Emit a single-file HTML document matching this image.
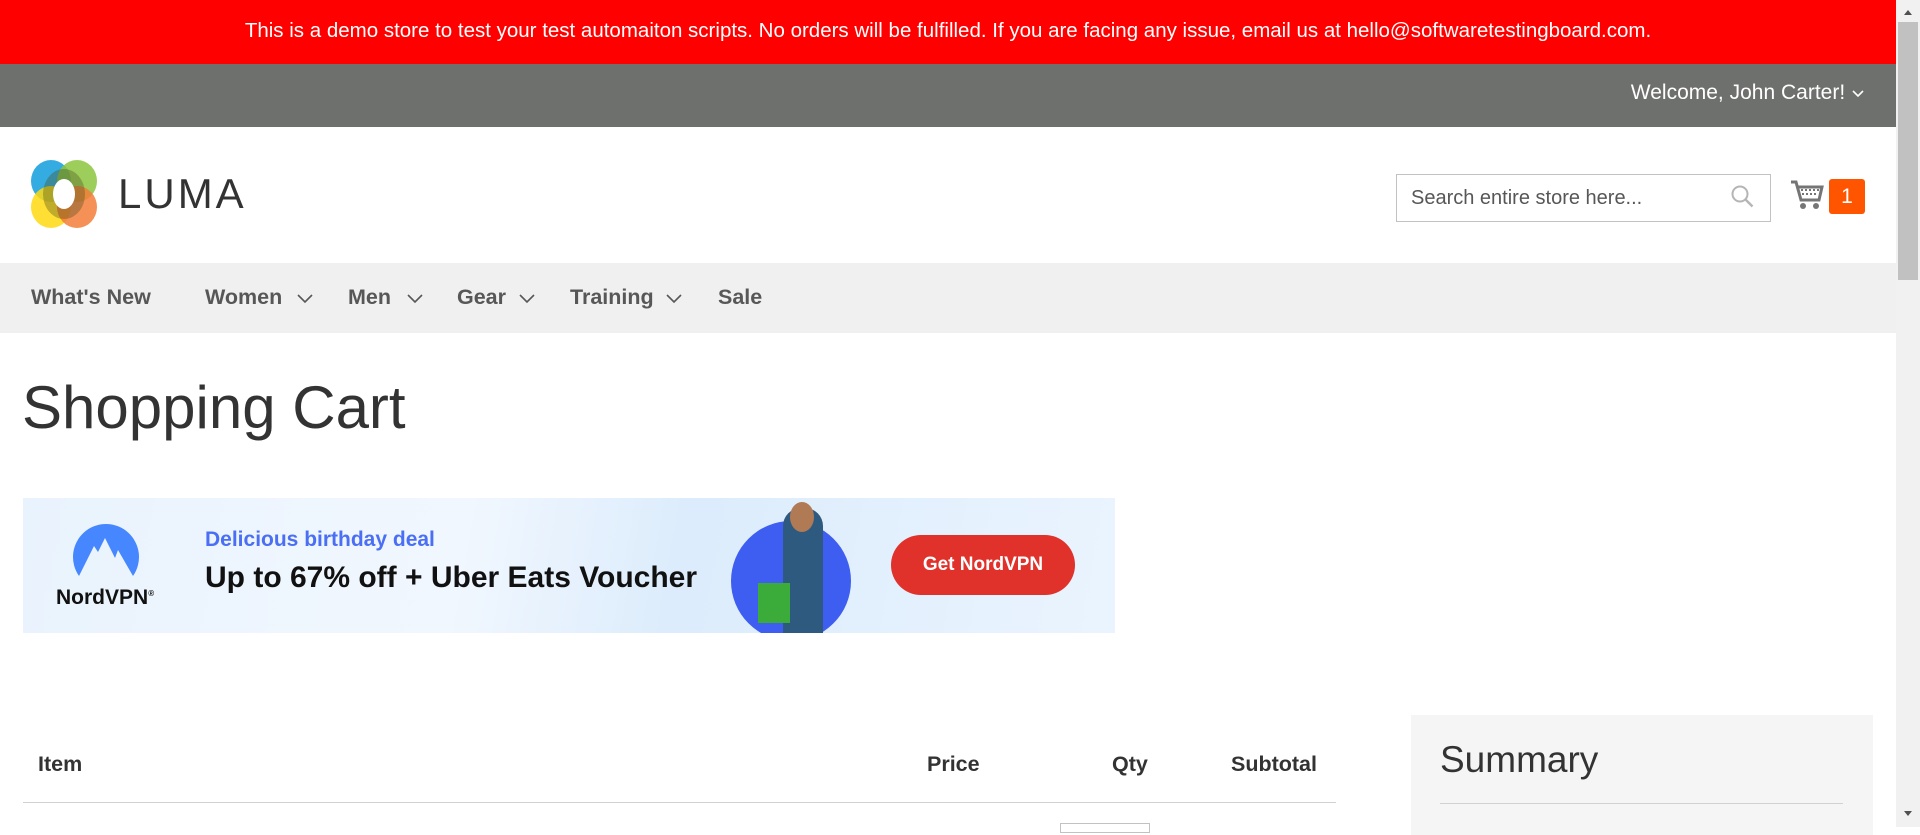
<!DOCTYPE html>
<html><head><meta charset="utf-8">
<style>
*{margin:0;padding:0;box-sizing:border-box}
body{width:1920px;height:827px;overflow:hidden;position:relative;background:#fff;font-family:"Liberation Sans",sans-serif;color:#333}
.abs{position:absolute}
</style></head><body>
<div class="abs" style="left:0;top:0;width:1896px;height:64px;background:#ff0000;color:#fff;font-size:20.5px;text-align:center;line-height:62px">This is a demo store to test your test automaiton scripts. No orders will be fulfilled. If you are facing any issue, email us at hello@softwaretestingboard.com.</div>
<div class="abs" style="left:0;top:64px;width:1896px;height:63px;background:#6e706d"></div>
<div class="abs" style="right:55px;top:79px;color:#fff;font-size:21px;line-height:28px">Welcome, John Carter! <svg width="14" height="10" viewBox="0 0 14 10" style="vertical-align:middle"><path d="M2 3l5 5 5-5" stroke="#fff" stroke-width="1.6" fill="none"/></svg></div>
<!-- scrollbar -->
<div class="abs" style="left:1896px;top:0;width:24px;height:827px;background:#f1f1f1"></div>
<div class="abs" style="left:1898px;top:22px;width:20px;height:258px;background:#c1c1c1"></div>
<svg class="abs" style="left:1900px;top:6px" width="16" height="12"><path d="M4 9l4-5 4 5z" fill="#505050"/></svg>
<svg class="abs" style="left:1900px;top:808px" width="16" height="12"><path d="M4 3l4 5 4-5z" fill="#505050"/></svg>
<!-- logo -->
<svg class="abs" style="left:30px;top:160px" width="68" height="68" viewBox="0 0 68 68">
<ellipse cx="21" cy="21" rx="20" ry="21" fill="#29a8e0" opacity=".95"/>
<ellipse cx="47" cy="21" rx="20" ry="21" fill="#8cc63e" opacity=".85"/>
<ellipse cx="21" cy="47" rx="20" ry="21" fill="#ffd90f" opacity=".85"/>
<ellipse cx="47" cy="47" rx="20" ry="21" fill="#f37c38" opacity=".85"/>
<ellipse cx="34" cy="34" rx="21" ry="25" fill="#4a4a1a" opacity=".35"/>
<ellipse cx="34" cy="34" rx="11" ry="15" fill="#fff"/>
</svg>
<div class="abs" style="left:118px;top:170px;font-size:42px;letter-spacing:3px;color:#333;line-height:48px">LUMA</div>
<!-- search -->
<div class="abs" style="left:1396px;top:174px;width:375px;height:48px;border:1px solid #c2c2c2;font-size:20px;color:#575757;line-height:46px;padding-left:14px">Search entire store here...</div>
<svg class="abs" style="left:1730px;top:184px" width="26" height="26" viewBox="0 0 26 26"><circle cx="10" cy="10" r="7.5" stroke="#b5b5b5" stroke-width="2" fill="none"/><path d="M15.5 15.5l7 7" stroke="#b5b5b5" stroke-width="2.4"/></svg>
<svg class="abs" style="left:1790px;top:178px" width="34" height="34" viewBox="0 0 34 34"><path d="M1 4h5l5 18h18l3-13H8" stroke="#757575" stroke-width="3" fill="none"/><path d="M11 12h18M12 16h16" stroke="#757575" stroke-width="2" stroke-dasharray="2 2"/><circle cx="13" cy="28" r="3" fill="#757575"/><circle cx="26" cy="28" r="3" fill="#757575"/></svg>
<div class="abs" style="left:1829px;top:179px;width:36px;height:35px;background:#ff5501;border-radius:3px;color:#fff;font-size:21px;text-align:center;line-height:35px">1</div>
<!-- nav -->
<div class="abs" style="left:0;top:263px;width:1896px;height:70px;background:#f0f0f0"></div>
<div class="abs" style="top:283px;left:0;font-size:21.5px;font-weight:bold;color:#575757;line-height:28px;white-space:nowrap">
<span class="abs" style="left:31px">What's&nbsp;New</span>
<span class="abs" style="left:205px">Women</span>
<span class="abs" style="left:348px">Men</span>
<span class="abs" style="left:457px">Gear</span>
<span class="abs" style="left:570px">Training</span>
<span class="abs" style="left:718px">Sale</span>
</div>
<svg class="abs" style="left:0;top:290px" width="700" height="16"><g stroke="#575757" stroke-width="1.6" fill="none"><path d="M298 5l7 7 7-7"/><path d="M408 5l7 7 7-7"/><path d="M520 5l7 7 7-7"/><path d="M667 5l7 7 7-7"/></g></svg>
<!-- title -->
<div class="abs" style="left:22px;top:370px;font-size:60px;font-weight:300;color:#333;line-height:76px">Shopping Cart</div>
<!-- banner -->
<div class="abs" style="left:23px;top:498px;width:1092px;height:135px;background:linear-gradient(100deg,#e9f3fd 0%,#f1f7fe 40%,#dcecfc 60%,#eaf4fe 100%);overflow:hidden">
<svg class="abs" style="left:48px;top:22px" width="70" height="58" viewBox="0 0 70 58"><path d="M8 56A33 33 0 1 1 62 56L47 30l-3 8-10-20-7 14-4-6z" fill="#4687ff"/></svg>
<div class="abs" style="left:33px;top:88px;font-size:21px;font-weight:bold;color:#111">NordVPN<sup style="font-size:8px">®</sup></div>
<div class="abs" style="left:182px;top:30px;font-size:21px;font-weight:bold;color:#4a6ff5">Delicious birthday deal</div>
<div class="abs" style="left:182px;top:63px;font-size:30px;font-weight:bold;color:#111">Up to 67% off + Uber Eats Voucher</div>
<div class="abs" style="left:708px;top:23px;width:120px;height:120px;border-radius:50%;background:#3d5ef0"></div>
<div class="abs" style="left:760px;top:10px;width:40px;height:125px;background:#2f5a80;border-radius:18px 18px 0 0"></div>
<div class="abs" style="left:767px;top:4px;width:24px;height:30px;background:#b07a55;border-radius:50%"></div>
<div class="abs" style="left:735px;top:85px;width:32px;height:40px;background:#3bab3a"></div>
<div class="abs" style="left:868px;top:37px;width:184px;height:60px;border-radius:30px;background:#e0312a;color:#fff;font-size:19px;font-weight:bold;text-align:center;line-height:60px">Get NordVPN</div>
</div>
<!-- table -->
<div class="abs" style="top:751px;left:0;font-size:21.5px;font-weight:bold;color:#333;line-height:26px">
<span class="abs" style="left:38px">Item</span>
<span class="abs" style="left:927px">Price</span>
<span class="abs" style="left:1112px">Qty</span>
<span class="abs" style="left:1231px">Subtotal</span>
</div>
<div class="abs" style="left:23px;top:802px;width:1313px;height:1px;background:#d1d1d1"></div>
<div class="abs" style="left:1060px;top:823px;width:90px;height:10px;border:1px solid #c2c2c2"></div>
<!-- summary -->
<div class="abs" style="left:1411px;top:715px;width:462px;height:120px;background:#f5f5f5"></div>
<div class="abs" style="left:1440px;top:738px;font-size:37px;font-weight:300;color:#333;line-height:44px">Summary</div>
<div class="abs" style="left:1440px;top:803px;width:403px;height:1px;background:#d1d1d1"></div>
</body></html>
